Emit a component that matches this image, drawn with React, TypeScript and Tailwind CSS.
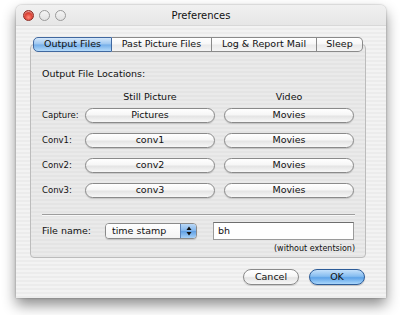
import React from "react";

const pill =
  "flex items-center justify-center h-[15px] rounded-full border border-[#8a8a8a] bg-[linear-gradient(#ffffff,#f6f6f6_45%,#e4e4e4_55%,#f7f7f7)] shadow-[0_1px_1px_rgba(0,0,0,0.15)] text-[9.5px] text-[#111]";

function Light({ red }: { red?: boolean }) {
  return red ? (
    <div className="w-[11px] h-[11px] rounded-full border border-[#8e2a22] bg-[radial-gradient(circle_at_50%_70%,#ff8a7a,#e0473a_45%,#b52418)] shadow-[inset_0_1px_1px_rgba(255,255,255,0.6)]" />
  ) : (
    <div className="w-[11px] h-[11px] rounded-full border border-[#9a9a9a] bg-[linear-gradient(#f4f4f4,#e2e2e2)]" />
  );
}

function Row({ label, still }: { label: string; still: string }) {
  return (
    <div className="flex items-center h-[15px]">
      <div className="w-[43px] text-[8.5px] text-[#111]">{label}</div>
      <div className={pill + " w-[130px]"}>{still}</div>
      <div className={pill + " w-[130px] ml-[9px]"}>Movies</div>
    </div>
  );
}

export default function App() {
  const tabs = ["Output Files", "Past Picture Files", "Log & Report Mail", "Sleep"];
  const widths = ["w-[79px]", "w-[100px]", "w-[105px]", "w-[46px]"];
  return (
    <div className="w-[400px] h-[315px] bg-white overflow-hidden font-['DejaVu_Sans',sans-serif]">
      <div className="ml-[16px] mt-[5px] w-[370px] h-[293px] rounded-t-[6px] flex flex-col bg-[repeating-linear-gradient(0deg,#ececec_0px,#ececec_2px,#f3f3f3_2px,#f3f3f3_4px)] shadow-[0_7px_14px_rgba(0,0,0,0.45),0_0_2px_rgba(0,0,0,0.35)]">
        {/* title bar */}
        <div className="relative h-[21px] flex items-center rounded-t-[6px] bg-[linear-gradient(#f0f0f0,#e6e6e6)] border-b border-[#d8d8d8]">
          <div className="flex gap-[5px] pl-[7px]">
            <Light red />
            <Light />
            <Light />
          </div>
          <div className="absolute inset-0 flex items-center justify-center text-[10px] text-[#111] pointer-events-none">
            Preferences
          </div>
        </div>
        {/* tabs + pane */}
        <div className="ml-[14px] w-[336px] mt-[11px] flex flex-col">
          <div className="relative z-10 flex justify-center h-[15px]">
            {tabs.map((t, i) => {
              const sel = i === 0;
              const first = i === 0;
              const last = i === tabs.length - 1;
              return (
                <div
                  key={t}
                  className={
                    "flex items-center justify-center text-[9.5px] text-[#111] border-y " +
                    widths[i] +
                    (first ? " rounded-l-[5px] border-l" : "") +
                    (last ? " rounded-r-[5px] border-r" : " border-r") +
                    (sel
                      ? " border-[#41689f] bg-[linear-gradient(#d6e8fb,#9cc6f0_48%,#74aee9_52%,#b4dafa)]"
                      : " border-[#8a8a8a] bg-[linear-gradient(#ffffff,#f7f7f7_48%,#e9e9e9_52%,#f5f5f5)]")
                  }
                >
                  {t}
                </div>
              );
            })}
          </div>
          <div className="-mt-[8px] h-[214px] rounded-[4px] border border-[#bcbcbc] bg-[repeating-linear-gradient(0deg,#e4e4e4_0px,#e4e4e4_2px,#eaeaea_2px,#eaeaea_4px)] flex flex-col pl-[11px]">
            <div className="mt-[23px] h-[12px] leading-[12px] text-[9.5px] text-[#111]">Output File Locations:</div>
            <div className="mt-[11px] h-[12px] leading-[12px] flex text-[9.5px] text-[#111]">
              <div className="w-[43px]" />
              <div className="w-[130px] text-center">Still Picture</div>
              <div className="w-[130px] ml-[9px] text-center">Video</div>
            </div>
            <div className="mt-[5px] flex flex-col gap-[10px]">
              <Row label="Capture:" still="Pictures" />
              <Row label="Conv1:" still="conv1" />
              <Row label="Conv2:" still="conv2" />
              <Row label="Conv3:" still="conv3" />
            </div>
            <div className="mt-[16px] w-[313px] h-px bg-[#9d9d9d] shadow-[0_1px_0_#f8f8f8]" />
            <div className="mt-[7px] h-[18px] flex items-center">
              <div className="w-[63px] text-[9.5px] text-[#111]">File name:</div>
              <div className="w-[92px] h-[16px] flex rounded-[4px] border border-[#8a8a8a] bg-white shadow-[0_1px_1px_rgba(0,0,0,0.15)] overflow-hidden">
                <div className="flex-1 flex items-center pl-[6px] text-[9.5px] text-[#111] bg-[linear-gradient(#ffffff,#f3f3f3)]">time stamp</div>
                <div className="w-[16px] flex items-center justify-center border-l border-[#5a82b8] bg-[linear-gradient(#b9d8f7,#80b4ec_50%,#5f9fe4_51%,#a6d0f7)]">
                  <svg width="6" height="10" viewBox="0 0 6 10">
                    <path d="M3 0.5 L5.5 4 L0.5 4 Z" fill="#111" />
                    <path d="M3 9.5 L5.5 6 L0.5 6 Z" fill="#111" />
                  </svg>
                </div>
              </div>
              <div className="ml-[16px] w-[141px] h-[18px] flex items-center pl-[4px] bg-white border border-[#9a9a9a] border-t-[#6e6e6e] text-[9.5px] text-[#111]">
                bh
              </div>
            </div>
            <div className="mt-[3px] w-[313px] h-[12px] leading-[12px] text-right text-[8px] text-[#111]">
              (without extentsion)
            </div>
          </div>
        </div>
        {/* bottom buttons */}
        <div className="mt-[11px] flex justify-end pr-[21px] gap-[10px]">
          <div className={pill + " w-[56px] h-[16px]"}>Cancel</div>
          <div className="w-[56px] h-[16px] flex items-center justify-center rounded-full border border-[#2d5c98] bg-[linear-gradient(#c4e0fb,#86bdf0_45%,#5ea3e8_55%,#a9d6fb)] shadow-[0_1px_1px_rgba(0,0,0,0.2)] text-[9.5px] text-[#111]">
            OK
          </div>
        </div>
      </div>
    </div>
  );
}
